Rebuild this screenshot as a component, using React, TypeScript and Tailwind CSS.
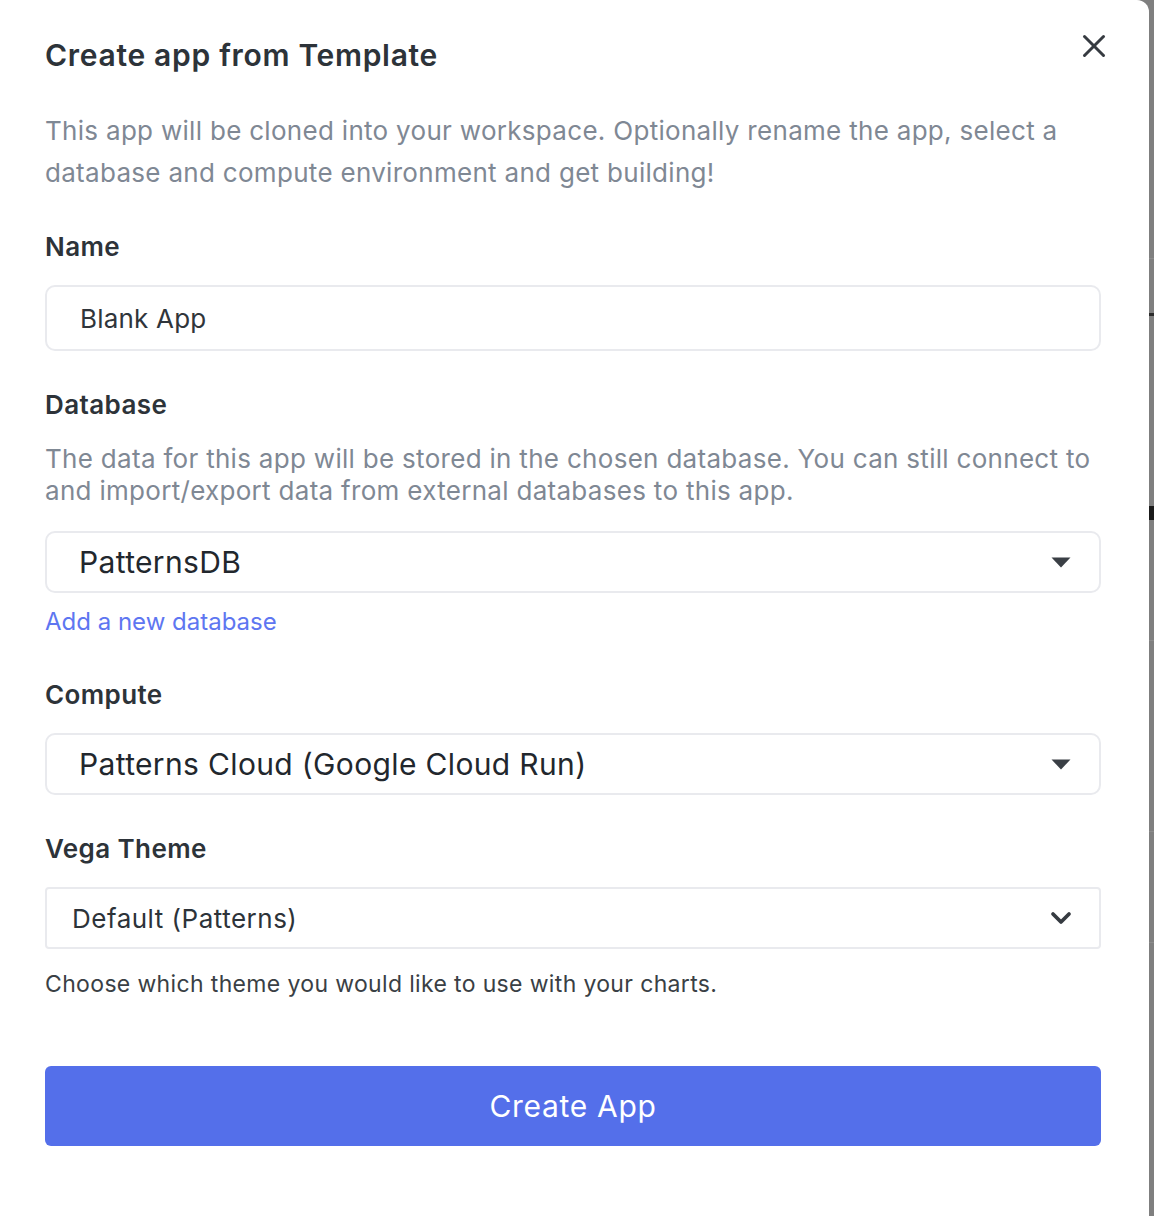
import { X, ChevronDown } from "lucide-react";

const font = { fontFamily: "Inter, 'Noto Sans', sans-serif" };

function Label({ children }: { children: React.ReactNode }) {
  return (
    <div className="text-[26px] leading-[32px] font-semibold tracking-[0.4px] text-[#2d3339]">{children}</div>
  );
}

function Caret() {
  return (
    <svg width="20" height="11" viewBox="0 0 20 11" className="shrink-0">
      <path d="M0.5 0.5 H19.5 L10 10.5 Z" fill="#3a3f45" />
    </svg>
  );
}

function CaretSelect({ value, className }: { value: string; className?: string }) {
  return (
    <div
      className={
        "flex h-[62px] items-center justify-between rounded-[10px] border-2 border-[#e9eaee] bg-white pl-[32px] pr-[28px] " +
        (className ?? "")
      }
    >
      <span className="text-[30px] leading-none tracking-[0.35px] text-[#22272d]">{value}</span>
      <Caret />
    </div>
  );
}

export default function App() {
  return (
    <div className="flex min-h-[1216px] w-[1154px] bg-[#7f7f7f]" style={font}>
      {/* modal */}
      <div className="w-[1149px] shrink-0 rounded-tr-[12px] bg-white pl-[45px] pr-[48px] pt-[37px] pb-[70px]">
        <div className="flex items-start justify-between">
          <h1 className="text-[30px] leading-[36px] font-semibold tracking-[0.7px] text-[#2d3339]">
            Create app from Template
          </h1>
          <button className="-mr-[12px] -mt-[10px] text-[#363b41]">
            <X size={38} strokeWidth={1.9} />
          </button>
        </div>

        <p className="mt-[37px] text-[26px] leading-[42px] tracking-[0.3px] text-[#7f8894]">
          This app will be cloned into your workspace. Optionally rename the app, select a database and compute
          environment and get building!
        </p>

        <div className="mt-[37px]">
          <Label>Name</Label>
          <div className="mt-[22px] flex h-[66px] items-center rounded-[10px] border-2 border-[#e9eaee] px-[33px] text-[26px] tracking-[0.2px] text-[#30353b]">
            Blank App
          </div>
        </div>

        <div className="mt-[38px]">
          <Label>Database</Label>
          <p className="mt-[22px] text-[26px] leading-[32px] tracking-[0.3px] text-[#7f8894]">
            The data for this app will be stored in the chosen database. You can still connect to and import/export
            data from external databases to this app.
          </p>
          <CaretSelect value="PatternsDB" className="mt-[24px]" />
          <a className="mt-[13px] block text-[24px] leading-[32px] text-[#5e76f1]">Add a new database</a>
        </div>

        <div className="mt-[41px]">
          <Label>Compute</Label>
          <CaretSelect value="Patterns Cloud (Google Cloud Run)" className="mt-[22px]" />
        </div>

        <div className="mt-[38px]">
          <Label>Vega Theme</Label>
          <div className="mt-[22px] flex h-[62px] items-center justify-between rounded-[4px] border-2 border-[#e9eaee] pl-[25px] pr-[22px]">
            <span className="text-[26px] tracking-[0.5px] text-[#2d3339]">Default (Patterns)</span>
            <ChevronDown size={32} strokeWidth={2.8} className="text-[#363b41]" />
          </div>
          <p className="mt-[20px] text-[23px] leading-[30px] tracking-[0.35px] text-[#3a3f45]">
            Choose which theme you would like to use with your charts.
          </p>
        </div>

        <button className="mt-[67px] flex h-[80px] w-full items-center justify-center rounded-[6px] bg-[#546fea] text-[30px] tracking-[0.7px] text-white">
          Create App
        </button>
      </div>

      {/* dimmed page behind */}
      <div className="flex flex-1 flex-col">
        <div className="mt-[258px] h-[1px] bg-[#8c8c8c]" />
        <div className="mt-[54px] h-[3px] bg-[#2a2a2a]" />
        <div className="mt-[190px] h-[14px] bg-[#1a1a1a]" />
        <div className="mt-[120px] h-[1px] bg-[#8c8c8c]" />
        <div className="mt-[190px] h-[1px] bg-[#8c8c8c]" />
        <div className="mt-[110px] h-[1px] bg-[#8c8c8c]" />
      </div>
    </div>
  );
}
